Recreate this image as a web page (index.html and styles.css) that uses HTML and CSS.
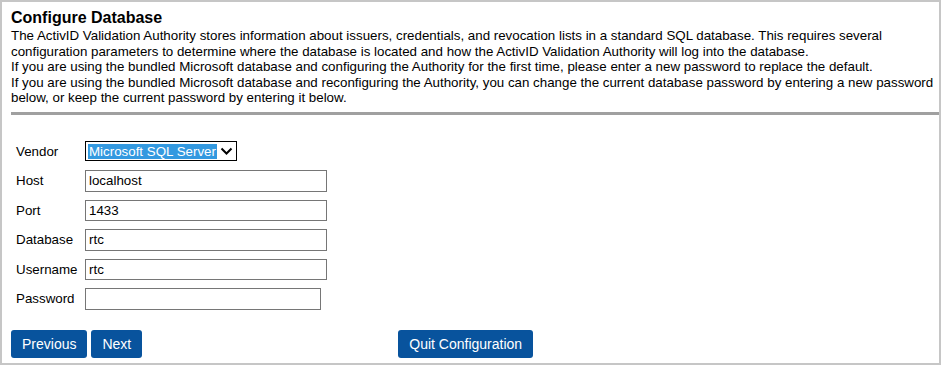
FILE: index.html
```html
<!DOCTYPE html>
<html>
<head>
<meta charset="utf-8">
<link rel="stylesheet" href="styles.css">
</head>
<body>
<div class="page">
  <div class="header">
    <h1 class="title">Configure Database</h1>
    <div class="intro">
      <div>The ActivID Validation Authority stores information about issuers, credentials, and revocation lists in a standard SQL database. This requires several configuration parameters to determine where the database is located and how the ActivID Validation Authority will log into the database.</div>
      <div>If you are using the bundled Microsoft database and configuring the Authority for the first time, please enter a new password to replace the default.</div>
      <div>If you are using the bundled Microsoft database and reconfiguring the Authority, you can change the current database password by entering a new password below, or keep the current password by entering it below.</div>
    </div>
  </div>
  <div class="rule"></div>
  <div class="form">
    <div class="row">
      <span class="label">Vendor</span>
      <div class="select">
        <span class="sel-text">Microsoft SQL Server</span>
        <svg class="chev" width="13" height="9" viewBox="0 0 13 9"><path d="M1.5 1.5 L6.5 6.5 L11.5 1.5" fill="none" stroke="#000" stroke-width="2"/></svg>
      </div>
    </div>
    <div class="row">
      <span class="label">Host</span>
      <input class="field" type="text" value="localhost">
    </div>
    <div class="row">
      <span class="label">Port</span>
      <input class="field" type="text" value="1433">
    </div>
    <div class="row">
      <span class="label">Database</span>
      <input class="field" type="text" value="rtc">
    </div>
    <div class="row">
      <span class="label">Username</span>
      <input class="field" type="text" value="rtc">
    </div>
    <div class="row">
      <span class="label">Password</span>
      <input class="field pw" type="password" value="">
    </div>
  </div>
  <div class="buttons">
    <button class="btn">Previous</button>
    <button class="btn">Next</button>
    <button class="btn quit">Quit Configuration</button>
  </div>
</div>
</body>
</html>
```
FILE: styles.css
```css
html, body {
  margin: 0;
  padding: 0;
  background: #fff;
}
body {
  font-family: "Liberation Sans", Arial, sans-serif;
  color: #000;
}
.page {
  box-sizing: border-box;
  width: 941px;
  height: 365px;
  border: 2px solid #c6c6c6;
  padding-left: 9px;
  overflow: hidden;
}
.header {
  padding-top: 7px;
  padding-right: 2px;
}
.title {
  margin: 0;
  font-size: 16px;
  line-height: 18px;
  font-weight: bold;
}
.intro {
  margin-top: 1px;
  font-size: 13.33px;
  line-height: 15.5px;
}
.rule {
  margin-top: 6.5px;
  height: 3px;
  background: #a0a0a0;
}
.form {
  margin-top: 21.5px;
  padding-left: 5px;
  display: flex;
  flex-direction: column;
}
.row {
  height: 29.5px;
  display: flex;
  align-items: center;
}
.label {
  width: 69px;
  font-size: 13.33px;
}
.select {
  box-sizing: border-box;
  width: 152px;
  height: 20px;
  border: 1px solid #000;
  display: flex;
  align-items: center;
  padding-left: 2px;
}
.sel-text {
  background: #3399e0;
  color: #fff;
  font-size: 13.33px;
  line-height: 15px;
  padding: 0 1px;
}
.chev {
  margin-left: 3px;
}
.field {
  box-sizing: border-box;
  width: 242px;
  height: 21.5px;
  margin: 0;
  border: 1px solid #767676;
  border-radius: 0;
  padding: 0 3px;
  font-family: "Liberation Sans", Arial, sans-serif;
  font-size: 13.33px;
  color: #000;
  outline: none;
}
.field.pw {
  width: 236px;
}
.buttons {
  margin-top: 16.5px;
  display: flex;
  gap: 4px;
}
.btn {
  box-sizing: border-box;
  height: 28px;
  margin: 0;
  padding: 0 11px;
  border: none;
  border-radius: 3px;
  background: #08539d;
  color: #fff;
  font-family: "Liberation Sans", Arial, sans-serif;
  font-size: 14px;
}
.quit {
  margin-left: 252px;
}
```
